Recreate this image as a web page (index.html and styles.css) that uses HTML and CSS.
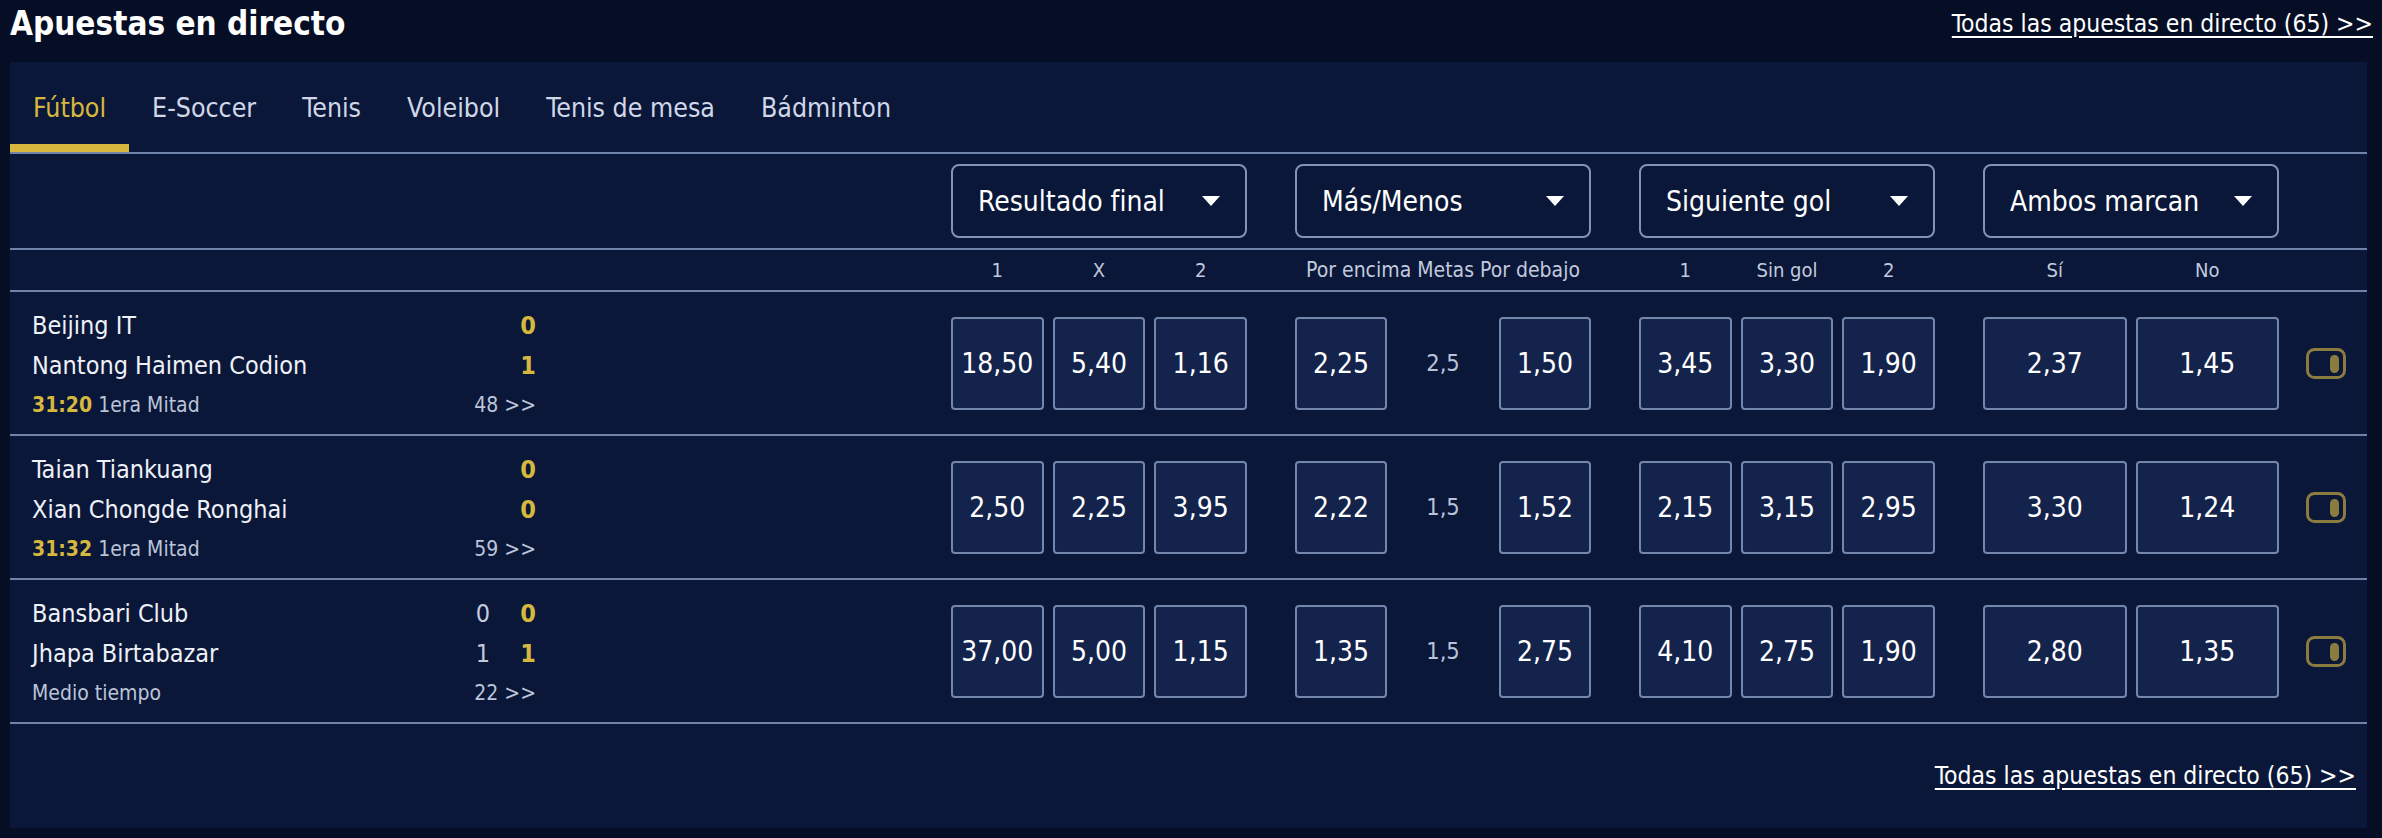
FILE: index.html
```html
<!DOCTYPE html>
<html lang="es">

<head>
    <meta charset="UTF-8">
    <meta name="viewport" content="width=device-width, initial-scale=1.0">
    <title>Apuestas en directo</title>
    <link rel="stylesheet" href="styles.css">
</head>

<body>
    <div class="page-head">
        <h1 class="page-title">Apuestas en directo</h1>
        <a class="all-link" href="#">Todas las apuestas en directo (65) &gt;&gt;</a>
    </div>

    <div class="live-panel">
        <div class="sport-tabs">
            <div class="tab active">Fútbol</div>
            <div class="tab">E-Soccer</div>
            <div class="tab">Tenis</div>
            <div class="tab">Voleibol</div>
            <div class="tab">Tenis de mesa</div>
            <div class="tab">Bádminton</div>
        </div>

        <!-- market selectors -->
        <div class="grid-row market-head">
            <div></div>
            <div class="cell"><div class="select">Resultado final<span class="caret"></span></div></div>
            <div class="cell"><div class="select">Más/Menos<span class="caret"></span></div></div>
            <div class="cell"><div class="select">Siguiente gol<span class="caret"></span></div></div>
            <div class="cell"><div class="select">Ambos marcan<span class="caret"></span></div></div>
            <div></div>
        </div>

        <div class="grid-row col-labels">
            <div></div>
            <div class="cell three"><span>1</span><span>X</span><span>2</span></div>
            <div class="cell single"><span>Por encima Metas Por debajo</span></div>
            <div class="cell three"><span>1</span><span>Sin gol</span><span>2</span></div>
            <div class="cell two"><span>Sí</span><span>No</span></div>
            <div></div>
        </div>

        <!-- match 1 -->
        <div class="grid-row match">
            <div class="match-info">
                <div class="team"><span class="name">Beijing IT</span><span class="score">0</span></div>
                <div class="team"><span class="name">Nantong Haimen Codion</span><span class="score">1</span></div>
                <div class="meta"><span class="name"><b class="clock">31:20</b> 1era Mitad</span><span>48 &gt;&gt;</span></div>
            </div>
            <div class="cell three"><div class="odd">18,50</div><div class="odd">5,40</div><div class="odd">1,16</div></div>
            <div class="cell line"><div class="odd">2,25</div><div class="goals">2,5</div><div class="odd">1,50</div></div>
            <div class="cell three"><div class="odd">3,45</div><div class="odd">3,30</div><div class="odd">1,90</div></div>
            <div class="cell two"><div class="odd">2,37</div><div class="odd">1,45</div></div>
            <div class="toggle-cell">
                <svg width="40" height="31" viewBox="0 0 40 31"><rect x="1.5" y="1.5" width="37" height="28" rx="7" fill="none" stroke="#8c7b3f" stroke-width="3"/><rect x="24" y="7" width="9" height="18" rx="4.5" fill="#8c7b3f"/></svg>
            </div>
        </div>

        <!-- match 2 -->
        <div class="grid-row match">
            <div class="match-info">
                <div class="team"><span class="name">Taian Tiankuang</span><span class="score">0</span></div>
                <div class="team"><span class="name">Xian Chongde Ronghai</span><span class="score">0</span></div>
                <div class="meta"><span class="name"><b class="clock">31:32</b> 1era Mitad</span><span>59 &gt;&gt;</span></div>
            </div>
            <div class="cell three"><div class="odd">2,50</div><div class="odd">2,25</div><div class="odd">3,95</div></div>
            <div class="cell line"><div class="odd">2,22</div><div class="goals">1,5</div><div class="odd">1,52</div></div>
            <div class="cell three"><div class="odd">2,15</div><div class="odd">3,15</div><div class="odd">2,95</div></div>
            <div class="cell two"><div class="odd">3,30</div><div class="odd">1,24</div></div>
            <div class="toggle-cell">
                <svg width="40" height="31" viewBox="0 0 40 31"><rect x="1.5" y="1.5" width="37" height="28" rx="7" fill="none" stroke="#8c7b3f" stroke-width="3"/><rect x="24" y="7" width="9" height="18" rx="4.5" fill="#8c7b3f"/></svg>
            </div>
        </div>

        <!-- match 3 -->
        <div class="grid-row match">
            <div class="match-info">
                <div class="team"><span class="name">Bansbari Club</span><span class="half">0</span><span class="score">0</span></div>
                <div class="team"><span class="name">Jhapa Birtabazar</span><span class="half">1</span><span class="score">1</span></div>
                <div class="meta"><span class="name">Medio tiempo</span><span>22 &gt;&gt;</span></div>
            </div>
            <div class="cell three"><div class="odd">37,00</div><div class="odd">5,00</div><div class="odd">1,15</div></div>
            <div class="cell line"><div class="odd">1,35</div><div class="goals">1,5</div><div class="odd">2,75</div></div>
            <div class="cell three"><div class="odd">4,10</div><div class="odd">2,75</div><div class="odd">1,90</div></div>
            <div class="cell two"><div class="odd">2,80</div><div class="odd">1,35</div></div>
            <div class="toggle-cell">
                <svg width="40" height="31" viewBox="0 0 40 31"><rect x="1.5" y="1.5" width="37" height="28" rx="7" fill="none" stroke="#8c7b3f" stroke-width="3"/><rect x="24" y="7" width="9" height="18" rx="4.5" fill="#8c7b3f"/></svg>
            </div>
        </div>

        <div class="panel-foot">
            <a class="all-link" href="#">Todas las apuestas en directo (65) &gt;&gt;</a>
        </div>
    </div>
</body>

</html>
```

FILE: styles.css
```css
body {
    margin: 0;
    background: #050e25;
    color: #eef1f8;
    font-family: "Liberation Sans Narrow", "DejaVu Sans Condensed", "Roboto Condensed", "Liberation Sans", sans-serif;
}

.page-head {
    display: flex;
    justify-content: space-between;
    align-items: center;
    height: 46px;
    padding: 0 9px 0 10px;
    margin-bottom: 16px;
}

.page-title {
    margin: 0;
    font-size: 33px;
    font-weight: bold;
    color: #ffffff;
}

.all-link {
    color: #ffffff;
    font-size: 24.5px;
    text-decoration: underline;
    text-underline-offset: 4px;
}

.live-panel {
    margin: 0 15px 0 10px;
    background: #0a1738;
    height: 766px;
}

.sport-tabs {
    display: flex;
    height: 90px;
    border-bottom: 2px solid #6f82aa;
}

.tab {
    display: flex;
    align-items: center;
    padding: 0 23px;
    font-size: 26.5px;
    color: #d0d7e8;
}

.tab.active {
    color: #d7b83f;
    box-shadow: inset 0 -8px 0 #d7b83f;
}

.grid-row {
    display: grid;
    grid-template-columns: 1fr repeat(4, 344px) 88px;
    border-bottom: 2px solid #6f82aa;
}

.cell {
    padding-left: 48px;
}

.market-head {
    height: 94px;
    align-items: center;
}

.select {
    display: flex;
    justify-content: space-between;
    align-items: center;
    height: 74px;
    box-sizing: border-box;
    padding: 0 25px 0 25px;
    border: 2px solid #8193b8;
    border-radius: 8px;
    font-size: 28px;
    color: #ffffff;
}

.caret {
    width: 0;
    height: 0;
    border-left: 9px solid transparent;
    border-right: 9px solid transparent;
    border-top: 10px solid #ffffff;
}

.col-labels {
    height: 40px;
    align-items: center;
    font-size: 20px;
    color: #c2cade;
}

.col-labels .single {
    font-size: 21px;
}

.three {
    display: grid;
    grid-template-columns: 1fr 1fr 1fr;
    column-gap: 9px;
}

.two {
    display: grid;
    grid-template-columns: 1fr 1fr;
    column-gap: 9px;
}

.line {
    display: grid;
    grid-template-columns: 92px 1fr 92px;
}

.col-labels span {
    text-align: center;
    white-space: nowrap;
    display: flex;
    justify-content: center;
}

.match {
    height: 142px;
    align-items: center;
}

.match-info {
    width: 504px;
    padding-left: 22px;
    display: flex;
    flex-direction: column;
    justify-content: center;
    margin-top: 4px;
}

.team,
.meta {
    display: flex;
    align-items: center;
    height: 40px;
}

.team {
    font-size: 25px;
}

.team .name,
.meta .name {
    flex: 1;
}

.score {
    width: 46px;
    text-align: right;
    color: #d7b83f;
    font-weight: bold;
}

.half {
    color: #c2cade;
}

.meta {
    font-size: 21px;
    color: #bcc4d9;
}

.clock {
    color: #d7b83f;
}

.odd {
    height: 93px;
    box-sizing: border-box;
    border: 2px solid #7486ac;
    border-radius: 4px;
    background: #13234b;
    display: flex;
    justify-content: center;
    align-items: center;
    font-size: 28px;
    color: #ffffff;
}

.goals {
    display: flex;
    justify-content: center;
    align-items: center;
    font-size: 23.5px;
    color: #b9c2d9;
}

.toggle-cell {
    display: flex;
    justify-content: center;
    align-items: center;
    padding-left: 6px;
}

.panel-foot {
    display: flex;
    justify-content: flex-end;
    align-items: center;
    height: 103px;
    padding-right: 11px;
}
```
